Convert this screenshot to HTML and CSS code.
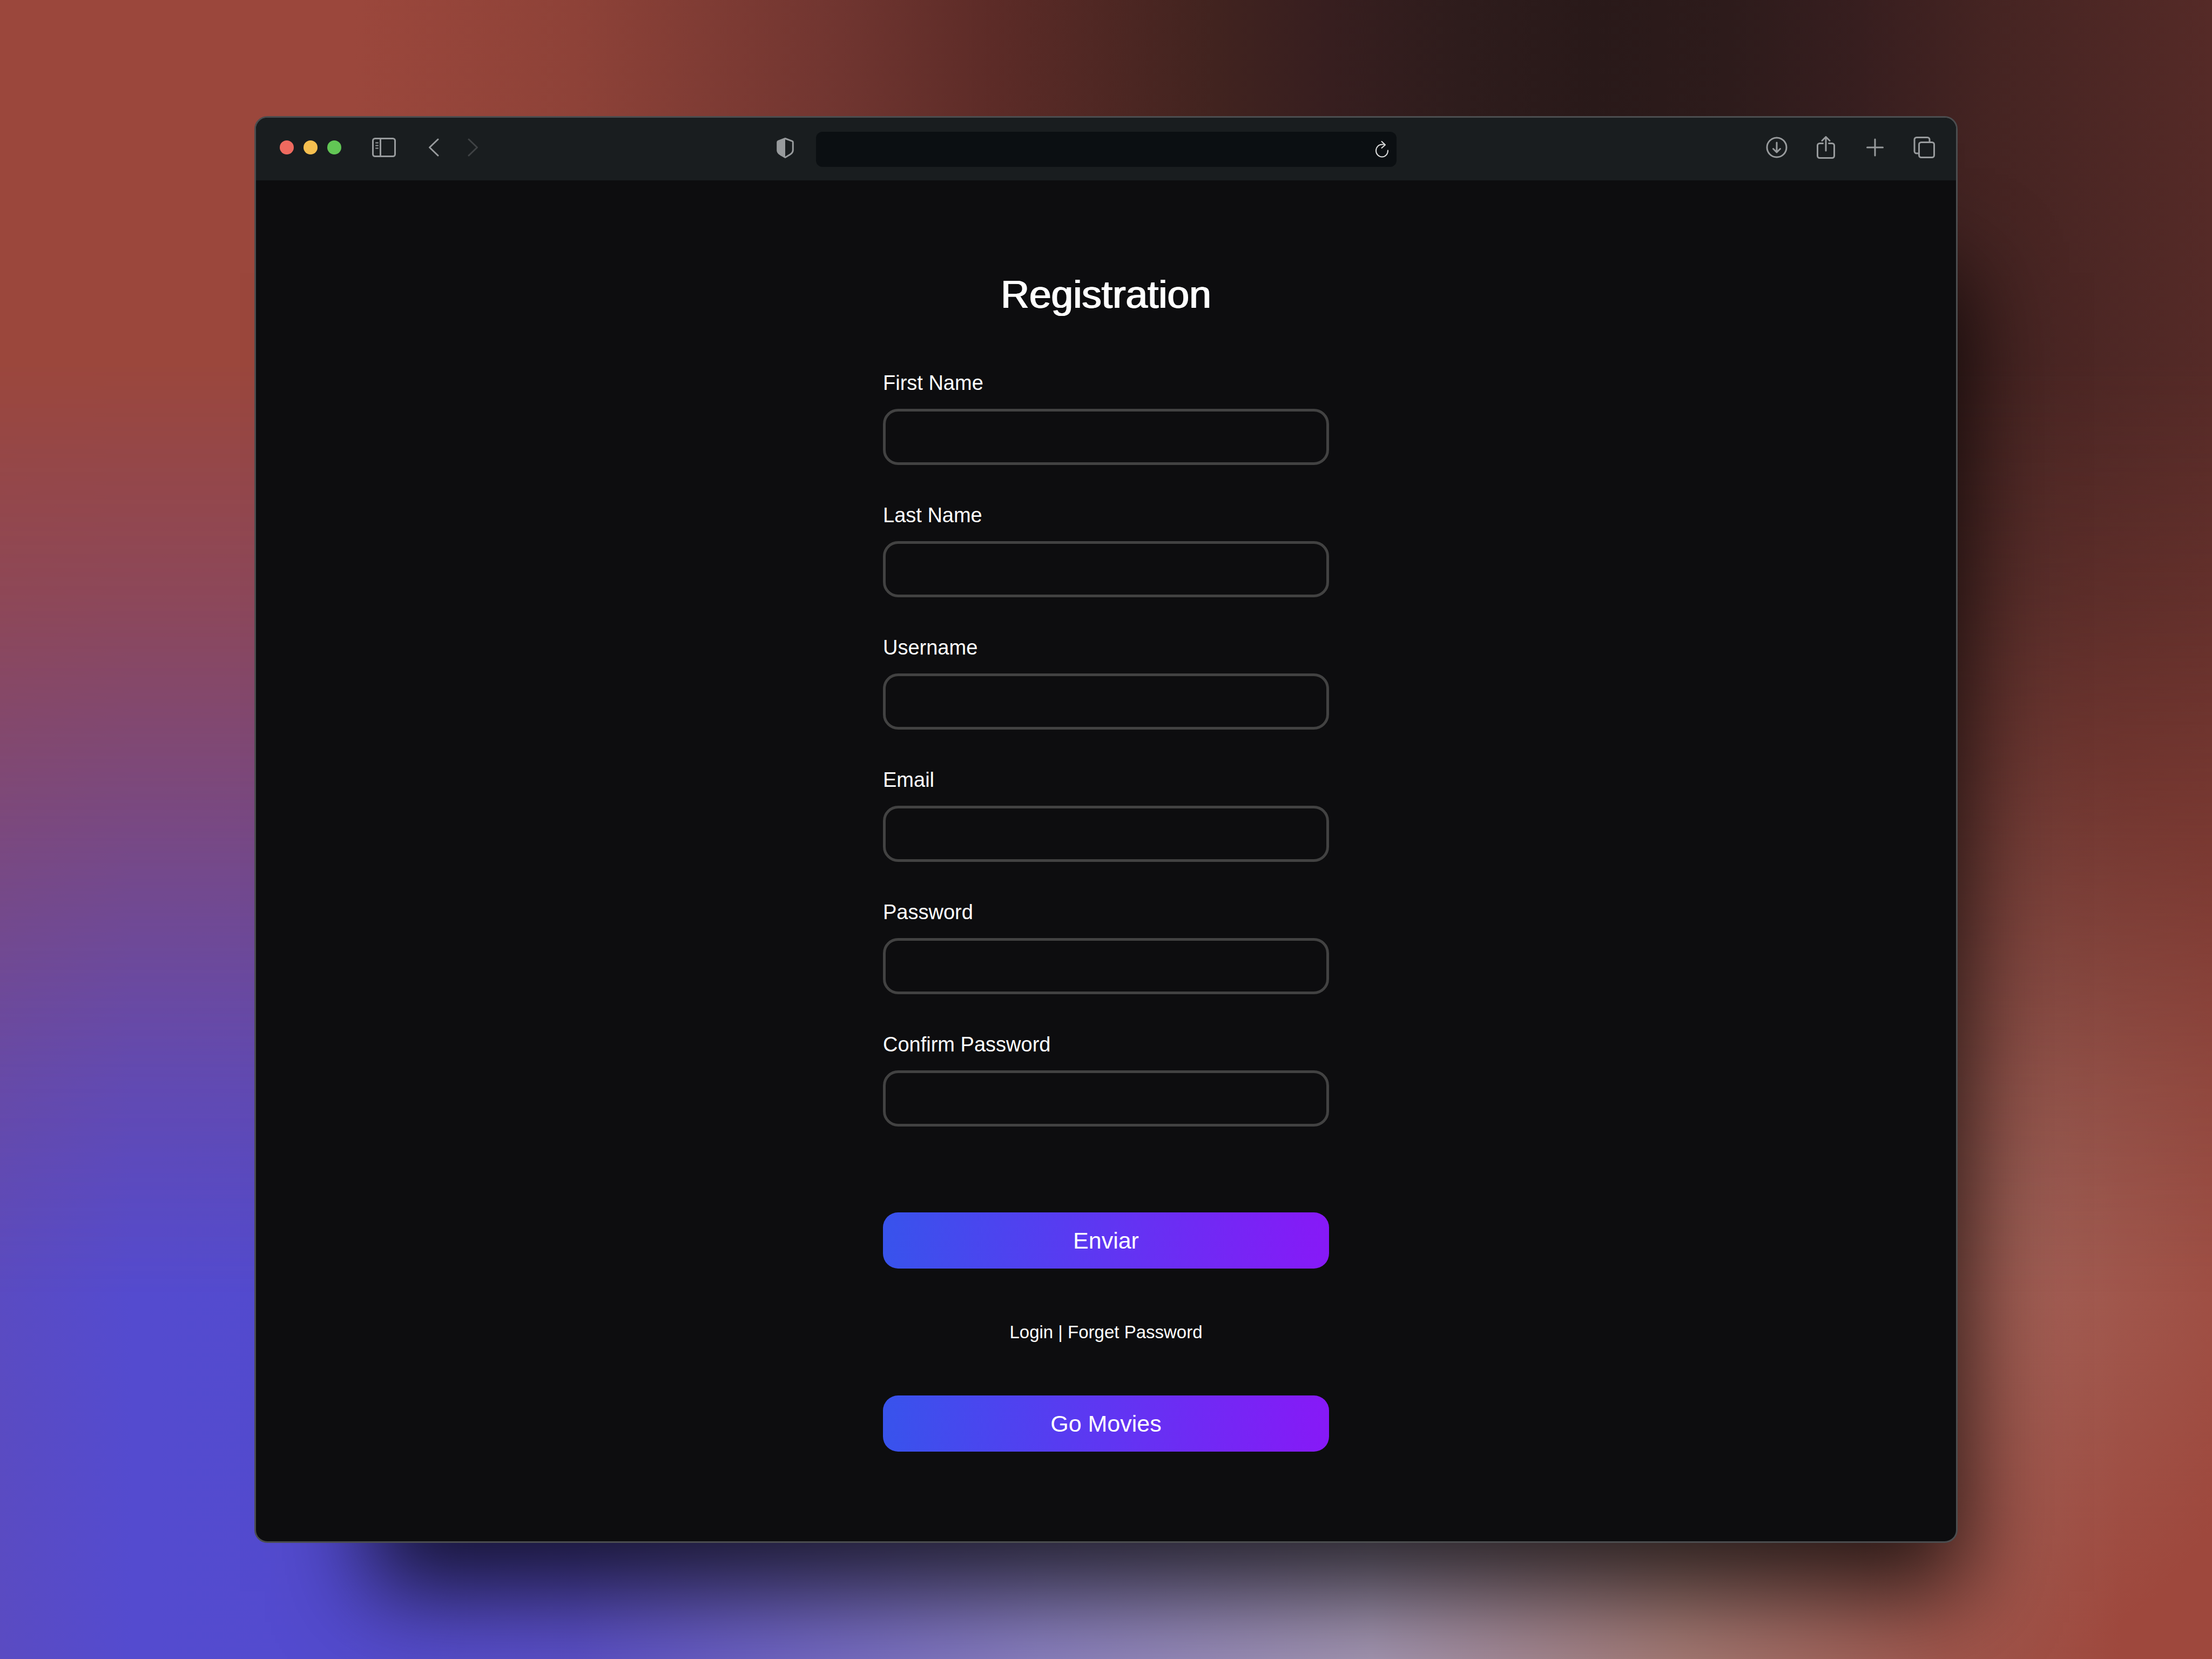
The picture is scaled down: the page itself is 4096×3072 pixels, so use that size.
FILE: index.html
```html
<!DOCTYPE html>
<html lang="en">
<head>
<meta charset="utf-8">
<meta name="viewport" content="width=device-width, initial-scale=1">
<title>Registration</title>
<link rel="stylesheet" href="styles.css">
</head>
<body>
<div class="window">
  <header class="toolbar">
    <div class="tools">
      <span class="lights"><i class="light red"></i><i class="light amber"></i><i class="light green"></i></span>
      <button class="tool sidebar" type="button" aria-label="Sidebar">
        <svg width="44" height="36" viewBox="0 0 44 36"><rect x="1.500" y="1.500" width="41" height="33" rx="4"/><path d="M15.500 2v32"/><path class="thin" d="M7 9.500h4M7 14.500h4M7 19.500h4"/></svg>
      </button>
      <button class="tool back" type="button" aria-label="Back">
        <svg width="20" height="34" viewBox="0 0 20 34"><path d="M18 2 2.500 17 18 32"/></svg>
      </button>
      <button class="tool forward" type="button" aria-label="Forward" disabled>
        <svg width="20" height="34" viewBox="0 0 20 34"><path d="M2 2 17.500 17 2 32"/></svg>
      </button>
    </div>
    <div class="location">
      <svg class="shield" width="32" height="38" viewBox="0 0 32 38"><path d="M16 1.500 29 6.300Q30.300 6.800 30.300 8.500V23C30.300 29 25 31.500 16 36.500 7 31.500 1.700 29 1.700 23V8.500Q1.700 6.800 3 6.300Z"/><path class="solid" d="M16 1.500V36.500C7 31.500 1.700 29 1.700 23V8.500Q1.700 6.800 3 6.300Z"/></svg>
      <div class="address">
        <input type="text" aria-label="Address">
        <button class="tool reload" type="button" aria-label="Reload">
          <svg width="26" height="32" viewBox="0 0 26 32"><path d="M24 18.500A11 11.500 0 1 1 13 7.500h5"/><path d="M12.500 2 19 8.300 12.500 14"/></svg>
        </button>
      </div>
    </div>
    <div class="tools end">
      <button class="tool" type="button" aria-label="Downloads">
        <svg width="40" height="42" viewBox="0 0 40 42"><circle cx="20" cy="21" r="18"/><path d="M20 12v18M13.500 23.500 20 30l6.500-6.500"/></svg>
      </button>
      <button class="tool" type="button" aria-label="Share">
        <svg width="40" height="42" viewBox="0 0 40 42"><path d="M14.500 13.500H8.500a4 4 0 0 0-4 4v19a4 4 0 0 0 4 4h23a4 4 0 0 0 4-4v-19a4 4 0 0 0-4-4h-6M20 27V2M13 8.500 20 1.500l7 7"/></svg>
      </button>
      <button class="tool" type="button" aria-label="New tab">
        <svg width="40" height="42" viewBox="0 0 40 42"><path d="M20 6v30M5.500 21h29"/></svg>
      </button>
      <button class="tool" type="button" aria-label="Tabs">
        <svg width="40" height="42" viewBox="0 0 40 42"><path d="M10 32H6a4 4 0 0 1-4-4V6.500a4 4 0 0 1 4-4H26a4 4 0 0 1 4 4V11"/><rect x="10.500" y="11.500" width="28" height="28" rx="4"/></svg>
      </button>
    </div>
  </header>
  <main class="page">
    <form class="form">
      <h1>Registration</h1>
      <div class="fields">
        <div class="field"><label for="first">First Name</label><input id="first" type="text"></div>
        <div class="field"><label for="last">Last Name</label><input id="last" type="text"></div>
        <div class="field"><label for="user">Username</label><input id="user" type="text"></div>
        <div class="field"><label for="email">Email</label><input id="email" type="email"></div>
        <div class="field"><label for="pass">Password</label><input id="pass" type="password"></div>
        <div class="field"><label for="confirm">Confirm Password</label><input id="confirm" type="password"></div>
      </div>
      <button class="action" type="submit">Enviar</button>
      <p class="links"><a href="#login">Login</a> | <a href="#forget">Forget Password</a></p>
      <button class="action" type="button">Go Movies</button>
    </form>
  </main>
</div>
</body>
</html>
```
FILE: styles.css
```css
* {
  box-sizing: border-box;
}

body {
  position: relative;
  isolation: isolate;
  margin: 0;
  min-height: 100vh;
  padding: 215px 471px;
  font-family: "Liberation Sans", Arial, sans-serif;
  color: #fff;
  background:
    radial-gradient(ellipse 13% 28% at 91% 72%, #a2655bcc 0%, #a2655b77 45%, #a2655b00 100%),
    linear-gradient(90deg, #5a4bc2 0%, #544bcf 6%, #534bcf 15%, #5b50c8 26%, #8a80c0 47%, #a496b2 62%, #a57a74 76%, #a0564c 88%, #9e483d 96%);
}

/* Warm upper half of the wallpaper, fading into the lower colours */
body::before {
  content: "";
  position: absolute;
  inset: 0;
  z-index: -1;
  background: linear-gradient(90deg, #9b473c 0%, #9b473c 16%, #8e4238 26%, #703530 38%, #5c2b27 45%, #41231f 55%, #371e1f 60%, #2e1c1c 66%, #291919 72%, #2d1b1b 78%, #371e1f 84%, #452422 90%, #552a27 100%);
  mask-image: linear-gradient(180deg, #000 22%, #000000cc 36%, #00000033 65%, #00000000 78%);
}

button,
input {
  font: inherit;
  color: inherit;
}

.window {
  display: flex;
  flex-direction: column;
  overflow: hidden;
  border: 3px solid #4b4d4f;
  border-radius: 24px;
  background: #0d0d0f;
  box-shadow: 113px 190px 160px -100px #000000c0;
}

.toolbar {
  display: grid;
  grid-template-columns: 1fr auto 1fr;
  align-items: center;
  height: 116px;
  padding: 0 39px 0 44px;
  background: #191d1f;
}

.tools {
  display: flex;
  align-items: center;
  padding-bottom: 6px;
}

.end {
  justify-content: flex-end;
  gap: 51px;
}

.lights {
  display: flex;
  gap: 18px;
}

.light {
  width: 26px;
  height: 26px;
  border-radius: 50%;
}

.red {
  background: #ee6a5f;
}

.amber {
  background: #f5bf4f;
}

.green {
  background: #62c655;
}

.tool {
  display: flex;
  padding: 0;
  border: 0;
  background: none;
  color: #989b9d;
}

.sidebar {
  margin-left: 57px;
}

.back {
  margin-left: 60px;
}

.forward {
  margin-left: 53px;
  color: #3f4244;
}

svg {
  fill: none;
  stroke: currentColor;
  stroke-width: 3px;
  stroke-linecap: round;
  stroke-linejoin: round;
}

.thin {
  stroke-width: 2px;
}

.solid {
  fill: currentColor;
  stroke: none;
}

.location {
  display: flex;
  align-items: center;
  gap: 41px;
  margin-left: -78px;
  color: #989b9d;
}

.shield {
  margin-bottom: 4px;
}

.address {
  display: flex;
  align-items: center;
  width: 1075px;
  height: 65px;
  padding-right: 14px;
  border-radius: 12px;
  background: #0b0f12;
}

.address input {
  flex: 1;
  height: 100%;
  padding: 0 24px;
  border: 0;
  background: none;
}

.reload {
  color: #dcdddd;
}

.reload svg {
  stroke-width: 2px;
}

.page {
  display: flex;
  justify-content: center;
  padding: 166px 40px;
}

.form {
  width: 826px;
  max-width: 100%;
}

h1 {
  margin: 0 0 91px;
  font-size: 73px;
  font-weight: 400;
  line-height: 90px;
  text-align: center;
  text-shadow: 1px 0 #fff, -1px 0 #fff;
}

.fields {
  display: grid;
  gap: 65px;
  margin-bottom: 159px;
}

.field {
  display: grid;
  gap: 19px;
}

label {
  font-size: 38px;
  line-height: 57px;
}

.field input {
  width: 100%;
  height: 104px;
  padding: 0 28px;
  border: 5px solid #424242;
  border-radius: 28px;
  background: none;
  font-size: 38px;
}

.action {
  display: block;
  width: 100%;
  height: 104px;
  border: 0;
  border-radius: 28px;
  background: linear-gradient(90deg, #3853ec, #5f36f2 50%, #8719f7);
  font-size: 43px;
}

.links {
  margin: 94px 0;
  font-size: 33px;
  line-height: 47px;
  text-align: center;
}

.links a {
  color: inherit;
  text-decoration: none;
}
```
